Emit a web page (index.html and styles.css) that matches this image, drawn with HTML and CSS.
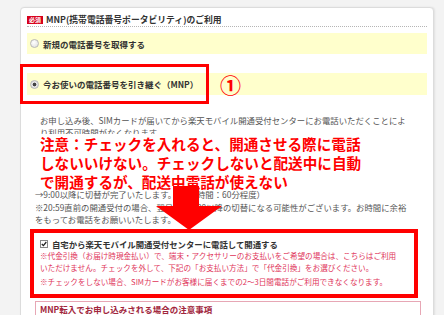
FILE: index.html
```html
<!DOCTYPE html>
<html lang="ja">
  <head>
    <meta charset="UTF-8" />
    <meta name="viewport" content="width=device-width, initial-scale=1.0" />
    <title>MNPのご利用</title>
    <link rel="stylesheet" href="styles.css">
  </head>
  <body>
    <div class="card">
      <div class="head">
        <span class="badge">必須</span>
        <span class="head-title">MNP(携帯電話番号ポータビリティ)のご利用</span>
      </div>

      <div class="option">
        <span class="radio"></span>新規の電話番号を取得する
      </div>
      <div class="option option-mnp">
        <span class="radio checked"></span>今お使いの電話番号を引き継ぐ（MNP）
        <div class="mark-box"></div>
        <span class="mark-num">①</span>
      </div>

      <p class="note">お申し込み後、SIMカードが届いてから楽天モバイル開通受付センターにお電話いただくことによ<br>り利用不可時間がなくなります。</p>

      <p class="warn">注意：チェックを入れると、開通させる際に電話<br>しないいけない。チェックしないと配送中に自動<br>で開通するが、配送中電話が使えない</p>

      <p class="note note-time">→9:00以降に切替が完了いたします。（開通時間：60分程度）<br>※20:59直前の開通受付の場合、翌日午前9:00以降の切替になる可能性がございます。お時間に余裕<br>をもってお電話をお願いいたします。</p>

      <svg class="arrow" width="66" height="44" viewBox="0 0 66 44">
        <path d="M17 0 H43 V20 H66 L33 44 L0 20 H17 Z" fill="#ff0000"/>
      </svg>

      <div class="check-box">
        <div class="check-line">
          <svg class="check" width="8" height="8" viewBox="0 0 8 8">
            <rect x="0.5" y="0.5" width="7" height="7" fill="#fff" stroke="#888"/>
            <path d="M1.8 4 L3.4 5.6 L6.3 2" fill="none" stroke="#222" stroke-width="1.3"/>
          </svg>
          自宅から楽天モバイル開通受付センターに電話して開通する
        </div>
        <p class="caution">※代金引換（お届け時現金払い）で、端末・アクセサリーのお支払いをご希望の場合は、こちらはご利用<br>いただけません。チェックを外して、下記の「お支払い方法」で「代金引換」をお選びください。</p>
        <p class="caution caution-last">※チェックをしない場合、SIMカードがお客様に届くまでの2〜3日間電話がご利用できなくなります。</p>
      </div>

      <div class="mnp-notice">MNP転入でお申し込みされる場合の注意事項</div>
    </div>
  </body>
</html>
```

FILE: styles.css
```css
body {
  margin: 0;
  padding: 7px 10px 0 20px;
  background-color: #f3f3f3;
  font-family: "Noto Sans CJK JP", sans-serif;
  color: #333;
  height: 315px;
  box-sizing: border-box;
  overflow: hidden;
}
.card {
  position: relative;
  background-color: #fff;
  border: 1px solid #dcdcdc;
  border-radius: 4px;
  padding: 0 6px 20px 6px;
  box-shadow: 1px 0 2px rgba(0, 0, 0, 0.08);
}
.head {
  display: flex;
  align-items: center;
  padding-top: 6px;
  height: 12px;
  border-bottom: 1px dotted #b5b5b5;
  box-sizing: content-box;
}
.badge {
  background-color: #d7001a;
  color: #fff;
  font-size: 6px;
  font-weight: bold;
  line-height: 8px;
  padding: 0 2px;
  margin-right: 3px;
}
.head-title {
  font-size: 8.8px;
  font-weight: bold;
  line-height: 12px;
  color: #333;
  white-space: nowrap;
}
.option {
  position: relative;
  display: flex;
  align-items: center;
  height: 21px;
  margin-top: 6px;
  padding-left: 3px;
  background-color: #ffffcc;
  font-size: 8.5px;
  font-weight: bold;
  color: #333;
  white-space: nowrap;
}
.option-mnp {
  margin-top: 19px;
  height: 22px;
}
.radio {
  width: 7px;
  height: 7px;
  border: 1px solid #b8b8b8;
  border-radius: 50%;
  background: radial-gradient(circle at 40% 35%, #fff, #dcdcdc);
  margin-right: 4px;
  flex-shrink: 0;
}
.radio.checked {
  background: radial-gradient(circle, #444 0, #444 1.6px, #e8e8e8 2.2px, #cfcfcf);
}
.mark-box {
  position: absolute;
  left: -7px;
  top: -9px;
  width: 183px;
  height: 34px;
  border: 3px solid #ff0000;
}
.mark-num {
  position: absolute;
  left: 193px;
  top: -2px;
  font-size: 21px;
  line-height: 26px;
  font-weight: bold;
  color: #ff0000;
}
.note {
  position: relative;
  margin: 19px 0 0 13px;
  font-size: 8.4px;
  line-height: 12px;
  color: #555;
  white-space: nowrap;
}
.warn {
  position: relative;
  margin: -4px 0 -3px 13px;
  background-color: #fff;
  font-size: 14.6px;
  font-weight: bold;
  line-height: 19px;
  color: #ff0000;
  white-space: nowrap;
}
.note-time {
  margin: 0 0 0 8px;
  line-height: 12.5px;
}
.arrow {
  position: absolute;
  left: 135px;
  top: 178px;
}
.check-box {
  margin: 3px 9px 0 3px;
  border: 4px solid #ff0000;
  padding: 5px 0 6px 6px;
  white-space: nowrap;
}
.check-line {
  display: flex;
  align-items: center;
  height: 12px;
  font-size: 8.4px;
  font-weight: bold;
  color: #333;
}
.check {
  margin-right: 4px;
  flex-shrink: 0;
}
.caution {
  margin: 0;
  font-size: 7.6px;
  line-height: 12px;
  color: #e0345a;
}
.caution-last {
  margin-top: 2px;
}
.mnp-notice {
  margin: 3px 6px 0 8px;
  border: 1px solid #e7a7b5;
  padding: 1px 0 6px 4px;
  font-size: 8.5px;
  font-weight: bold;
  line-height: 12px;
  color: #a1263c;
}
```
